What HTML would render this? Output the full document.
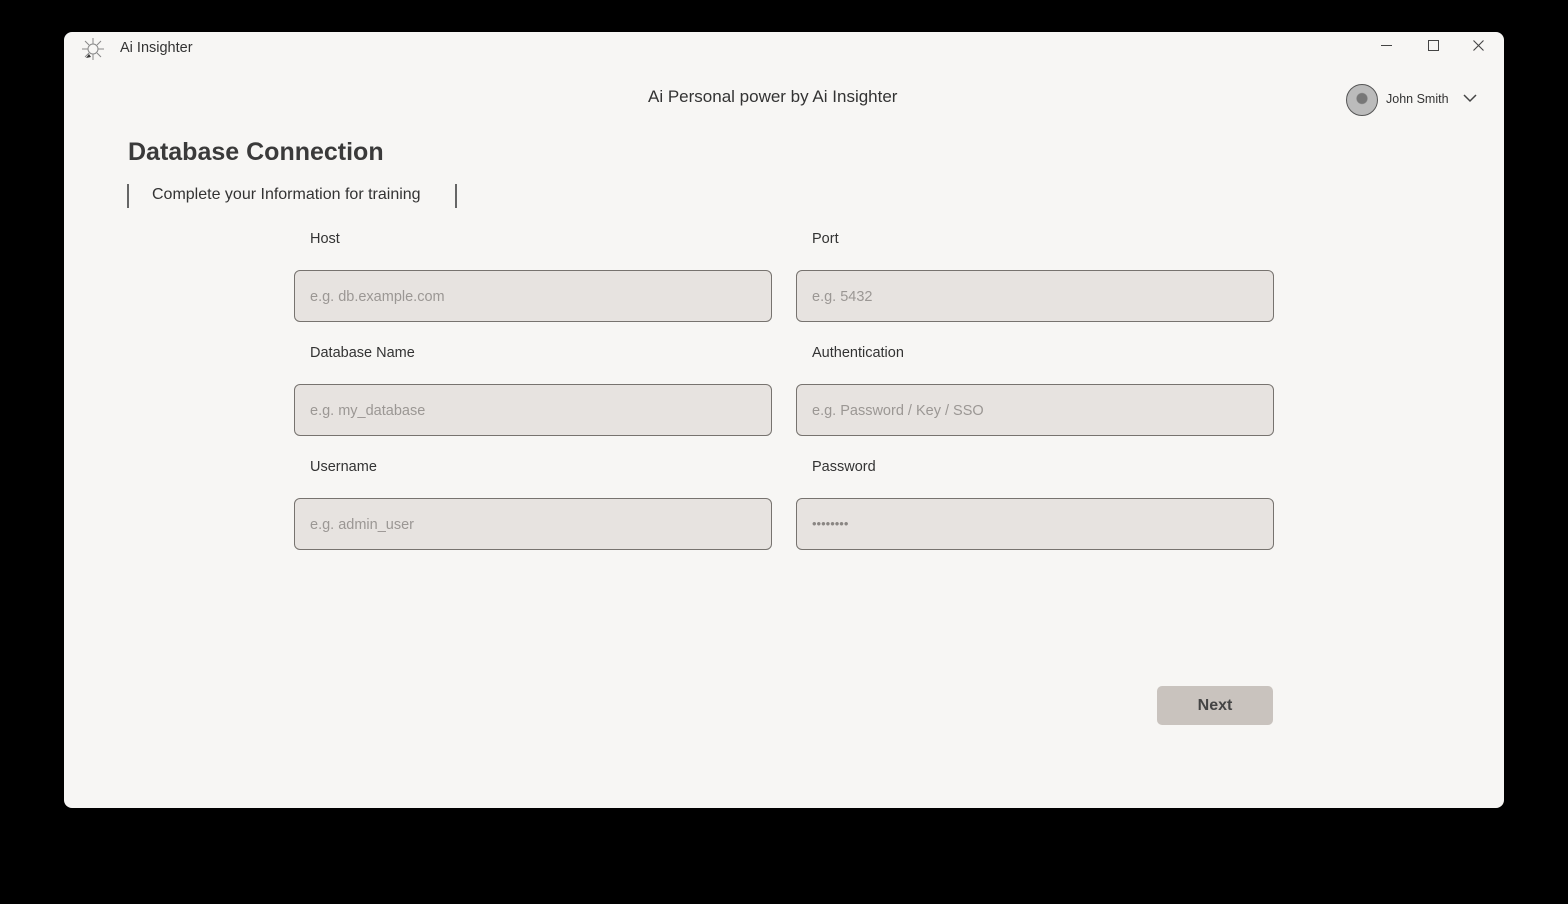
<!DOCTYPE html>
<html><head><meta charset="utf-8"><style>
body{margin:0;width:1568px;height:904px;background:#000;position:relative;font-family:"Liberation Sans",sans-serif;overflow:hidden}
.win{position:absolute;left:64px;top:32px;width:1440px;height:776px;background:#f7f6f4;border-radius:8px}
.t{position:absolute;white-space:nowrap;color:#3a3a3a}
.lbl{font-size:14.5px;color:#333}
.inp{position:absolute;width:478px;height:52px;border:1px solid #77736f;border-radius:6px;background:#e7e3e0;box-sizing:border-box}
.inp span{position:absolute;left:15px;top:18px;font-size:14.5px;color:#9b9794}
</style></head><body>
<div class="win">
<svg style="position:absolute;left:16px;top:4px" width="26" height="26" viewBox="0 0 26 26"><g fill="none" stroke="#888" stroke-width="1"><circle cx="13" cy="13" r="5"/><path d="M13 2v6M13 18v6M2 13h6M18 13h6M5 5l4 4M17 17l4 4M21 5l-4 4M5 21l4-4"/></g><path d="M6 22l3-4 2 3z" fill="#333"/></svg>
<div class="t" style="left:56px;top:8px;font-size:14.5px;color:#333">Ai Insighter</div>
<div style="position:absolute;left:1317px;top:13px;width:11px;border-top:1px solid #444"></div>
<div style="position:absolute;left:1364px;top:8px;width:9px;height:9px;border:1px solid #444"></div>
<svg style="position:absolute;left:1409px;top:8px" width="11" height="11"><path d="M0.5 0.5l10 10M10.5 0.5l-10 10" stroke="#444" stroke-width="1.1"/></svg>
<div class="t" style="left:584px;top:55px;font-size:17px;color:#333">Ai Personal power by Ai Insighter</div>
<div style="position:absolute;left:1282px;top:52px;width:30px;height:30px;border-radius:50%;border:1px solid #555;background:radial-gradient(circle at 50% 45%,#777 0 5px,#bbb 6px)"></div>
<div class="t" style="left:1322px;top:60px;font-size:12.5px;color:#333">John Smith</div>
<svg style="position:absolute;left:1399px;top:62px" width="14" height="9"><path d="M1 1l6 6 6-6" fill="none" stroke="#444" stroke-width="1.5"/></svg>
<div class="t" style="left:64px;top:106px;font-size:25px;font-weight:bold;color:#3a3a3a">Database Connection</div>
<div style="position:absolute;left:63px;top:152px;height:24px;border-left:2px solid #666"></div>
<div style="position:absolute;left:391px;top:152px;height:24px;border-left:2px solid #666"></div>
<div class="t" style="left:88px;top:154px;font-size:16px;color:#333">Complete your Information for training</div>
<div class="t lbl" style="left:246px;top:199px">Host</div>
<div class="t lbl" style="left:748px;top:199px">Port</div>
<div class="inp" style="left:230px;top:238px"><span>e.g. db.example.com</span></div>
<div class="inp" style="left:732px;top:238px"><span>e.g. 5432</span></div>
<div class="t lbl" style="left:246px;top:313px">Database Name</div>
<div class="t lbl" style="left:748px;top:313px">Authentication</div>
<div class="inp" style="left:230px;top:352px"><span>e.g. my_database</span></div>
<div class="inp" style="left:732px;top:352px"><span>e.g. Password / Key / SSO</span></div>
<div class="t lbl" style="left:246px;top:427px">Username</div>
<div class="t lbl" style="left:748px;top:427px">Password</div>
<div class="inp" style="left:230px;top:466px"><span>e.g. admin_user</span></div>
<div class="inp" style="left:732px;top:466px"><span style="font-size:13px;top:17px;color:#8a8683;letter-spacing:0px">••••••••</span></div>
<div style="position:absolute;left:1093px;top:654px;width:116px;height:39px;background:#c9c3be;border-radius:5px;text-align:center;line-height:39px;font-size:16px;font-weight:bold;color:#444">Next</div>
</div>
</body></html>
